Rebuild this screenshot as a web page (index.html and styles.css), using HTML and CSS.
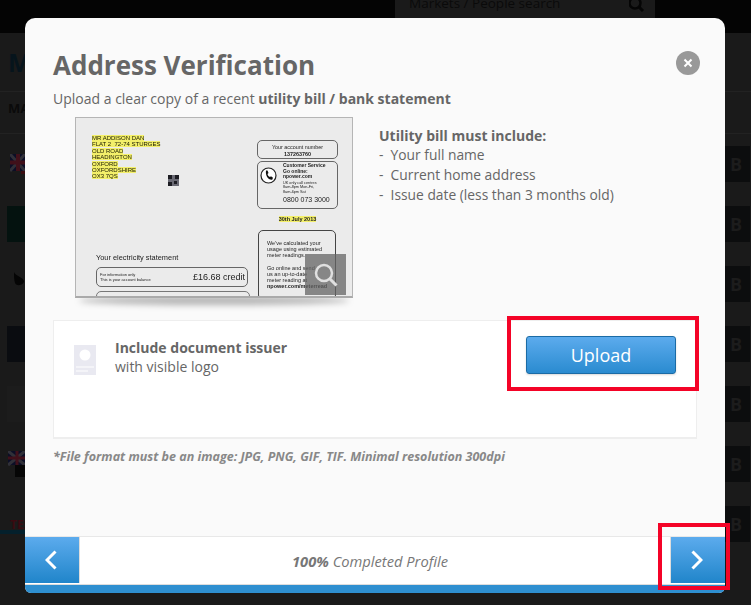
FILE: index.html
```html
<!DOCTYPE html>
<html>
<head>
	<title>Address Verification</title>
	<link rel="stylesheet" href="styles.css">
</head>
<body>

<div class="backdrop">
	<div class="topbar">
		<div class="search">
			<span>Markets / People search</span>
			<svg width="16" height="16" viewBox="0 0 16 16"><circle cx="6" cy="3" r="5.500" fill="none" stroke="#050505" stroke-width="2.500"/><path d="M10 7l4 4" stroke="#050505" stroke-width="3"/></svg>
		</div>
	</div>
	<div class="pagehead">M</div>
	<div class="tabhead">MA</div>

	<div class="row">
		<svg class="flag" width="15" height="20" viewBox="0 0 15 20"><rect width="15" height="17" fill="#0b0e26"/><path d="M0 0l15 17M15 0L0 17" stroke="#303038" stroke-width="3"/><path d="M8 0v17M0 8.500h15" stroke="#40101a" stroke-width="4"/><rect x="11" y="17" width="4" height="3" fill="#3a0c10"/></svg>
		<div class="logo-b">B</div>
	</div>
	<div class="row">
		<div class="thumb thumb-teal"></div>
		<div class="logo-b">B</div>
	</div>
	<div class="row">
		<svg class="drop" width="12" height="14" viewBox="0 0 12 14"><path d="M1 0c1 4 9 5 10 9 0 4-7 6-9 2C1 8 1 4 1 0z" fill="#050505"/></svg>
		<div class="logo-b">B</div>
	</div>
	<div class="row">
		<div class="thumb thumb-navy"></div>
		<div class="logo-b">B</div>
	</div>
	<div class="row">
		<div class="thumb thumb-grey"></div>
		<div class="logo-b">B</div>
	</div>
	<div class="row">
		<svg class="flag flag-low" width="17" height="26" viewBox="0 0 17 26"><rect width="17" height="14" fill="#0b0e26"/><path d="M0 0l17 14M17 0L0 14" stroke="#303038" stroke-width="3"/><path d="M9 0v14M0 7h17" stroke="#40101a" stroke-width="3"/><rect x="7" y="14" width="10" height="12" fill="#060606"/></svg>
		<div class="logo-b">B</div>
	</div>
	<div class="row">
		<div class="tes">TES</div>
		<div class="logo-b">B</div>
	</div>
	<div class="attr">ATTRIBUTE</div>
</div>

<div class="modal">
	<div class="modal-body">
		<button class="close" aria-label="Close">
			<svg width="10" height="10" viewBox="0 0 10 10"><path d="M1.500 1.500l7 7M8.500 1.500l-7 7" stroke="#fff" stroke-width="2"/></svg>
		</button>
		<h1>Address Verification</h1>
		<p class="lead">Upload a clear copy of a recent <b>utility bill / bank statement</b></p>

		<div class="sample">
			<div class="bill-wrap">
				<div class="bill">
					<div class="bill-left">
						<div class="addr">
							<span>MR ADDISON DAN</span><br>
							<span>FLAT 2&nbsp; 72-74 STURGES</span><br>
							<span>OLD ROAD</span><br>
							<span>HEADINGTON</span><br>
							<span>OXFORD</span><br>
							<span>OXFORDSHIRE</span><br>
							<span>OX3 7QS</span>
						</div>
						<div class="bill-title">Your electricity statement</div>
						<div class="credit">
							<div class="credit-note">For information only<br>This is your account balance</div>
							<div class="credit-val">£16.68 credit</div>
						</div>
						<div class="credit-next"></div>
					</div>
					<div class="bill-right">
						<div class="acct">Your account number<br><b>137263760</b></div>
						<div class="service">
							<svg class="phone" width="17" height="17" viewBox="0 0 17 17"><circle cx="8.500" cy="8.500" r="7.500" fill="#fff" stroke="#222" stroke-width="1.200"/><path d="M6 3.500l1.500 0 1 2.500-1 1c.3 1.500 1.200 2.500 2.500 3l1-.8 2 1.500-.8 2c-4 .5-7-4-6.200-9.200z" fill="#111"/></svg>
							<div>
								<b>Customer Service<br>Go online:<br>npower.com</b>
								<div class="small">UK only call centres<br>8am-8pm Mon-Fri,<br>8am-6pm Sat</div>
								<div class="tel">0800 073 3000</div>
							</div>
						</div>
						<div class="bill-date"><span>30th July 2013</span></div>
						<div class="usage">We've calculated your<br>usage using estimated<br>meter readings.<br><br>Go online and send<br>us an up-to-date<br>meter reading at<br><b>npower.com/meterread</b></div>
					</div>
					<svg class="qr" width="11" height="11" viewBox="0 0 11 11"><rect width="11" height="11" fill="#6a6a74"/><path d="M0 0h4v4H0zM7 0h4v4H7zM0 7h4v4H0zM6 6h3v3H6z" fill="#1c1c22"/></svg>
					<div class="zoom-tag">
						<svg width="24" height="24" viewBox="0 0 24 24"><circle cx="10" cy="10" r="8" fill="none" stroke="#e0e0e0" stroke-width="2.500"/><path d="M15.500 15.500l7 7" stroke="#e0e0e0" stroke-width="3"/></svg>
					</div>
				</div>
			</div>
			<div class="must">
				<div class="must-title"><b>Utility bill must include:</b></div>
				<div>-&nbsp; Your full name</div>
				<div>-&nbsp; Current home address</div>
				<div>-&nbsp; Issue date (less than 3 months old)</div>
			</div>
		</div>

		<div class="card">
			<svg class="doc" width="22" height="30" viewBox="0 0 22 30"><rect width="22" height="30" fill="#e9e9f1"/><circle cx="11" cy="10" r="5.500" fill="#fff"/><path d="M2 22h18M2 26h12" stroke="#fff" stroke-width="1"/></svg>
			<div class="card-text"><b>Include document issuer</b><br>with visible logo</div>
			<button class="upload">Upload</button>
		</div>
		<p class="fileinfo">*File format must be an image: JPG, PNG, GIF, TIF. Minimal resolution 300dpi</p>
	</div>

	<div class="footer">
		<button class="nav nav-prev" aria-label="Back">
			<svg width="12" height="20" viewBox="0 0 12 20"><path d="M10.500 1.500L2 10l8.500 8.500" fill="none" stroke="#fff" stroke-width="3"/></svg>
		</button>
		<div class="progress"><b>100%</b> Completed Profile</div>
		<button class="nav nav-next" aria-label="Next">
			<svg width="12" height="20" viewBox="0 0 12 20"><path d="M1.500 1.500L10 10l-8.500 8.500" fill="none" stroke="#fff" stroke-width="3"/></svg>
		</button>
	</div>
	<div class="progress-bar"></div>
</div>

<div class="mark mark-upload"></div>
<div class="mark mark-next"></div>

</body>
</html>
```

FILE: styles.css
```css
html, body {
	margin: 0;
	height: 100%;
	overflow: hidden;
	background: #1a1a1a;
	font-family: "Open Sans", sans-serif;
}

/* dimmed page behind the dialog */
.backdrop {
	height: 605px;
	overflow: hidden;
	color: #0a0a0a;
}
.topbar {
	height: 33px;
	background: #040404;
}
.search {
	display: flex;
	justify-content: space-between;
	margin-left: 395px;
	width: 260px;
	height: 18px;
	padding: 0 10px 0 14px;
	box-sizing: border-box;
	background: #1a1a1a;
	font-size: 13.500px;
	line-height: 7px;
	overflow: hidden;
}
.pagehead {
	height: 59px;
	padding-left: 8px;
	box-sizing: border-box;
	border-bottom: 1px solid #222;
	font-size: 25px;
	font-weight: bold;
	line-height: 59px;
	color: #06141c;
}
.tabhead {
	height: 42px;
	padding-left: 8px;
	box-sizing: border-box;
	border-bottom: 1px solid #222;
	font-size: 13px;
	font-weight: bold;
	line-height: 32px;
}
.row {
	display: flex;
	justify-content: space-between;
	align-items: center;
	height: 60px;
	padding-right: 1px;
}
.logo-b {
	width: 25px;
	height: 36px;
	padding-left: 5px;
	box-sizing: border-box;
	background: #0c0d0e;
	color: #1c1c1c;
	font-size: 18px;
	font-weight: bold;
	line-height: 36px;
}
.flag {
	margin-left: 10px;
}
.flag-low {
	margin-left: 8px;
}
.drop {
	margin: -10px 0 0 13px;
}
.thumb {
	margin-left: 7px;
	width: 18px;
	height: 36px;
}
.thumb-teal { background: #04120f; }
.thumb-navy { background: #0a0c10; }
.thumb-grey { background: #1c1c1c; }
.tes {
	align-self: flex-start;
	margin-top: 26px;
	width: 25px;
	padding-left: 10px;
	box-sizing: border-box;
	border-bottom: 4px solid #04202c;
	font-size: 12px;
	font-weight: bold;
	line-height: 10px;
	color: #3a0a10;
}
.attr {
	margin-left: 90px;
	padding-top: 27px;
	font-size: 13px;
	line-height: 14px;
}

/* dialog */
.modal {
	position: absolute;
	left: 25px;
	top: 18px;
	width: 700px;
	height: 575px;
	display: flex;
	flex-direction: column;
	background: #fafafa;
	border-radius: 10px 10px 6px 6px;
	overflow: hidden;
	color: #666;
	font-size: 14px;
	line-height: 20px;
}
.modal-body {
	flex: 1;
	position: relative;
	padding: 27px 28px 0;
}
.close {
	position: absolute;
	top: 33px;
	right: 25px;
	width: 24px;
	height: 24px;
	padding: 0;
	border: 0;
	border-radius: 50%;
	background: #999;
	display: flex;
	align-items: center;
	justify-content: center;
}
h1 {
	margin: 0;
	font-size: 26px;
	line-height: 40px;
	font-weight: bold;
}
.lead {
	margin: 4px 0 0;
}

.sample {
	display: flex;
	margin-top: 8px;
}
.bill-wrap {
	position: relative;
	margin-left: 22px;
	width: 278px;
	height: 181px;
}
.bill-wrap:after {
	content: "";
	position: absolute;
	left: 4px;
	right: 4px;
	bottom: -7px;
	height: 9px;
	border-radius: 50%;
	background: rgba(0, 0, 0, 0.28);
	filter: blur(3px);
}
.bill {
	position: relative;
	z-index: 1;
	display: grid;
	grid-template-columns: 181px 81px;
	height: 181px;
	box-sizing: border-box;
	border: 1px solid #b5b5b5;
	border-bottom: 2px solid #aaa;
	background: #ebebeb;
	overflow: hidden;
	filter: blur(0.3px);
	font-family: "Liberation Sans", sans-serif;
	color: #222;
	font-size: 6px;
	line-height: 7px;
}
.bill-left {
	padding: 17px 0 0 16px;
	min-width: 0;
}
.addr {
	height: 45px;
	font-size: 6px;
	line-height: 6.400px;
	color: #1a1a00;
}
.addr span {
	background: #f3ef6a;
}
.bill-title {
	margin: 73px 0 0 4px;
	font-size: 7.400px;
	line-height: 10px;
}
.credit {
	display: flex;
	justify-content: space-between;
	align-items: center;
	margin: 4px 0 0 4px;
	width: 152px;
	height: 20px;
	padding: 0 2px 0 3px;
	box-sizing: border-box;
	border: 1px solid #666;
	border-radius: 5px;
}
.credit-note {
	font-size: 4px;
	line-height: 5px;
}
.credit-val {
	font-size: 9px;
}
.credit-next {
	margin: 4px 0 0 4px;
	width: 152px;
	height: 20px;
	border: 1px solid #777;
	border-radius: 5px;
}
.bill-right {
	padding-top: 22px;
}
.acct {
	height: 19px;
	box-sizing: border-box;
	padding-top: 3px;
	border: 1px solid #666;
	border-radius: 5px;
	text-align: center;
	font-size: 5.400px;
	line-height: 6.500px;
}
.service {
	display: flex;
	gap: 6px;
	margin-top: 2px;
	height: 48px;
	box-sizing: border-box;
	padding: 1px 0 0 2px;
	border: 1px solid #666;
	border-radius: 5px;
	font-size: 5px;
	line-height: 5.500px;
}
.phone {
	margin-top: 4px;
	flex: none;
}
.small {
	margin-top: 1px;
	font-size: 3.800px;
	line-height: 4.800px;
}
.tel {
	margin-top: 1px;
	font-size: 7px;
	line-height: 8px;
}
.bill-date {
	margin-top: 7px;
	text-align: center;
	font-weight: bold;
	font-size: 5.500px;
	line-height: 7px;
}
.bill-date span {
	background: #f3ef6a;
}
.usage {
	margin: 7px 2px 0 1px;
	height: 70px;
	box-sizing: border-box;
	padding: 9px 4px 0 8px;
	border: 1px solid #444;
	border-radius: 5px;
	font-size: 5.500px;
	line-height: 6.200px;
}
.qr {
	position: absolute;
	left: 92px;
	top: 57px;
}
.zoom-tag {
	position: absolute;
	left: 229px;
	top: 136px;
	width: 41px;
	height: 41px;
	background: rgba(100, 100, 100, 0.75);
	display: flex;
	align-items: center;
	justify-content: center;
}
.must {
	margin: 9px 0 0 26px;
	font-size: 13.800px;
}
.must-title {
	font-size: 14px;
	line-height: 19px;
}

.card {
	display: flex;
	align-items: flex-start;
	margin-top: 22px;
	height: 119px;
	box-sizing: border-box;
	padding: 15px 20px 0 20px;
	border: 1px solid #eee;
	border-bottom-width: 2px;
	background: #fff;
}
.doc {
	margin-top: 9px;
	flex: none;
}
.card-text {
	margin: 2px 0 0 19px;
	flex: 1;
	line-height: 19px;
}
.upload {
	width: 150px;
	height: 38px;
	padding: 0;
	border: 1px solid #1b6ba5;
	border-radius: 3px;
	background: linear-gradient(#5cabed, #2a8bd0);
	box-shadow: 0 1px 2px rgba(0, 0, 0, 0.15);
	color: #fff;
	font-family: "Open Sans", sans-serif;
	font-size: 18px;
}
.fileinfo {
	margin: 8px 0 0;
	font-size: 12.500px;
	font-weight: bold;
	font-style: italic;
	color: #888;
}

.footer {
	display: flex;
	align-items: stretch;
	height: 48px;
	box-sizing: border-box;
	border-top: 1px solid #e8e8e8;
	background: #fff;
}
.nav {
	width: 55px;
	margin-bottom: 1px;
	padding: 0 2px 0 0;
	border: 0;
	background: linear-gradient(#5cabed, #2085ca);
	display: flex;
	align-items: center;
	justify-content: center;
}
.nav-prev {
	border-right: 1px solid #ddd;
}
.nav-next {
	border-left: 1px solid #ddd;
}
.progress {
	flex: 1;
	padding-right: 10px;
	text-align: center;
	font-size: 14.700px;
	line-height: 48px;
	font-style: italic;
	color: #777;
}
.progress-bar {
	height: 9px;
	box-sizing: border-box;
	border-top: 1px solid #ddd;
	background: #2e8fd0;
}

/* red annotation boxes drawn on the screenshot */
.mark {
	position: absolute;
	box-sizing: border-box;
	border: 4px solid #f40327;
}
.mark-upload {
	left: 507px;
	top: 316px;
	width: 192px;
	height: 75px;
}
.mark-next {
	left: 658px;
	top: 523px;
	width: 72px;
	height: 67px;
}
```
